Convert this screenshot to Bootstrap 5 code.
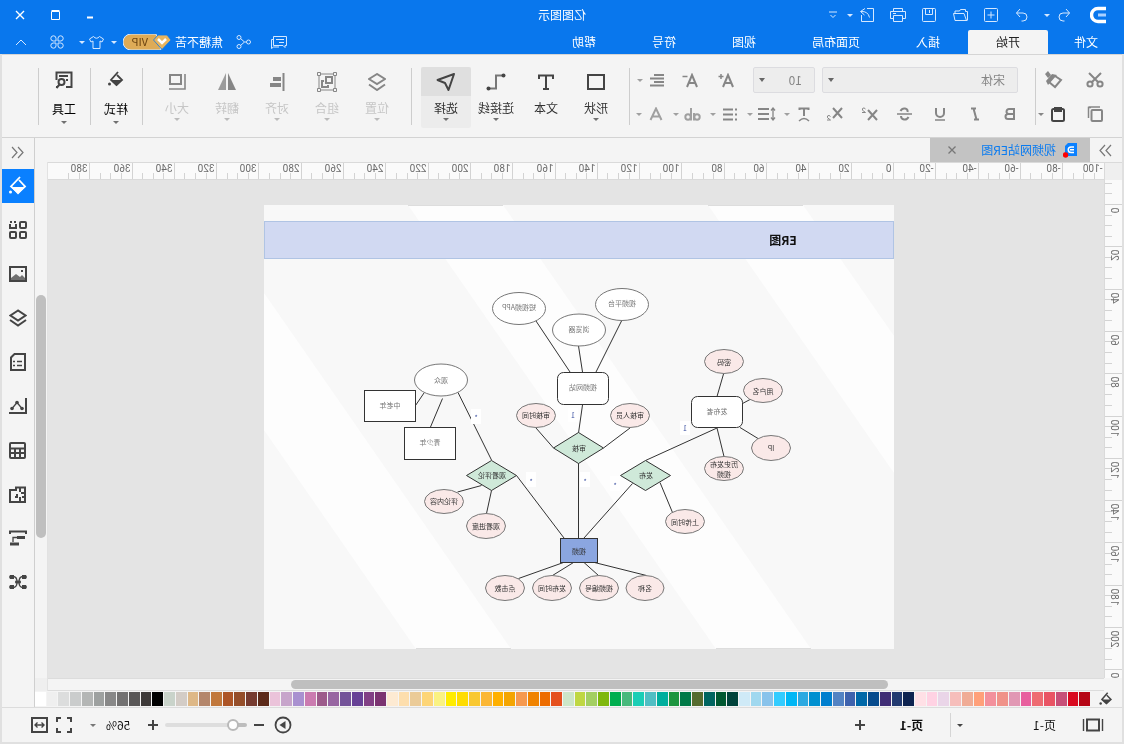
<!DOCTYPE html>
<html lang="zh-CN">
<head>
<meta charset="utf-8">
<meta name="viewport" content="width=device-width, initial-scale=1">
<title>亿图图示</title>
<link href="https://cdn.jsdelivr.net/npm/bootstrap@5.3.0/dist/css/bootstrap.min.css" rel="stylesheet">
<style>
  body { font: 12px/16px "Noto Sans CJK SC", sans-serif; color: #222; background: #f4f4f4; }
  /* the whole window is shown flipped left to right */
  .app { transform: scaleX(-1); height: 100vh; overflow: hidden; }
  button { border: 0; background: none; padding: 0; color: inherit; font: inherit; flex: none; display: inline-flex; align-items: center; justify-content: center; }
  svg { fill: none; stroke: currentColor; flex: none; }
  .solid { fill: currentColor; stroke: none; }
  .caret { width: 10px; height: 24px; display: inline-flex; align-items: center; justify-content: center; }
  .caret::after { content: ""; border: 3px solid transparent; border-top-color: currentColor; border-bottom: 0; }
  .ib { width: 24px; height: 24px; }

  .blue-head { background: #0977ed; color: #fff; }
  .title-row { display: grid; grid-template-columns: 1fr auto 1fr; height: 30px; align-items: center; }
  .qa { padding-left: 18px; color: #d5e8ff; }
  .qa .wide { width: 31px; height: 24px; }
  .undo-btn { margin-left: 14px; }
  .win-btns { padding-right: 3px; }
  .win-btns button { width: 35px; height: 28px; }
  .menu-row { height: 24px; }
  .menu-row a { color: #fff; text-decoration: none; padding: 0 28px; height: 24px; line-height: 24px; }
  .menu-row a:first-child { padding: 0 26px; }
  .menu-row a.on { background: #f4f4f4; color: #222; border-radius: 2px 2px 0 0; }
  .user-area { padding-right: 9px; color: #d5e8ff; }
  .share-btn { margin: 0 8px 0 12px; }
  .shirt-btn { width: 20px; margin-left: 2px; }
  .apps-btn { margin: 0 12px 0 8px; }

  .frame { border: 2px solid #e0e0e0; border-top: 0; min-height: 0; }
  .ribbon { height: 84px; border-top: 1px solid #d5d5d5; border-bottom: 1px solid #d3d3d3; color: #868686; }
  .vsep { width: 1px; height: 57px; margin-top: 13px; background: #cdcdcd; flex: none; }
  .two-rows { padding-top: 8px; flex: none; }
  .two-rows > div { height: 34px; display: flex; align-items: center; }
  .clip { width: 86px; padding-left: 15px; }
  .brush-btn { margin-left: 17px; }
  .paste-btn { margin-left: 13px; color: #444; }
  .fontbox { width: 405px; }
  .font-row1 { padding-left: 17px; }
  .font-row2 { padding-left: 13px; gap: 11px; }
  .grow-btn { margin-left: 15px; } .shrink-btn { margin-left: 12px; } .align-btn { margin-left: 9px; }
  .drop-set { gap: 3px; margin-left: -4px; }
  .pale { color: #a0a0a0; }
  .pick { height: 26px; border: 1px solid #dcdce0; border-radius: 2px; font: 12px/16px "Noto Sans CJK SC", sans-serif; color: #868686; padding: 0 20px 0 12px; appearance: none;
    background: #ededed url("data:image/svg+xml,%3Csvg xmlns='http://www.w3.org/2000/svg' width='6' height='4'%3E%3Cpath d='M0 0h6L3 4z' fill='%23666'/%3E%3C/svg%3E") no-repeat right 5px top 10px; }
  .pick-family { width: 196px; } .pick-size { width: 62px; margin-left: 7px; }
  .big-set { padding: 0 9px; } .big-set.first { padding-left: 8px; }
  .big { width: 50px; flex-direction: column; justify-content: flex-start; height: 61px; margin-top: 12px; border-radius: 2px; overflow: hidden; color: #444; }
  .big .pic { height: 29px; width: 100%; display: flex; align-items: center; justify-content: center; }
  .big .name { height: 16px; margin-top: 4px; color: #333; }
  .big .caret { height: 7px; color: #707070; }
  .big.on { background: #ececec; } .big.on .pic { background: #dfdfdf; }
  .big.off { color: #868686; } .big.off .name { color: #c6c6c6; } .big.off .caret { color: #bbb; }
  .big.low { margin-left: 1px; }
  .big.low .name { margin-top: 5px; color: #000; } .big.low .caret { height: 11px; } .big.low svg { margin-bottom: 4px; }

  .tabstrip { height: 24px; }
  .collapse-btn { width: 32px; height: 24px; color: #777; }
  .doc-tab { width: 160px; height: 24px; background: #c3c3c3; color: #0a7bf0; padding-left: 13px; gap: 7px; }
  .doc-tab .ib { color: #777; margin: 0 10px 0 auto; }
  .ruler-h { height: 18px; border: 1px solid #dadada; border-width: 1px 0; background: #fafafa; }
  .ruler-v { width: 18px; border-right: 1px solid #dadada; background: #fafafa; overflow: hidden; }
  .ruler-h svg, .ruler-v svg { stroke: #d3d3d3; display: block; overflow: visible; }
  .ruler-h text, .ruler-v text { font: 10px Roboto, sans-serif; fill: #6b6b6b; stroke: none; }
  .corner { width: 18px; background: #efefef; border-top: 1px solid #dadada; border-right: 1px solid #dadada; }
  .board { background: #e4e4e4; overflow: hidden; padding: 25px 0 0 210px; }
  .sheet { width: 630px; height: 444px; display: block; background: #f8f8f8; stroke: #333; }
  .sheet text { font: 7px "Noto Sans CJK SC", sans-serif; fill: #333; stroke: none; text-anchor: middle; }
  .sheet .soft text { fill: #777; }
  .sheet .heading { font: bold 12px "Noto Sans CJK SC", sans-serif; fill: #111; }
  .sheet .tag { fill: #3a4fa0; }
  .vbar { width: 13px; background: #f4f4f4; border-left: 1px solid #e2e2e2; padding: 115px 1px 0; }
  .vbar div { height: 243px; border-radius: 5px; background: #bfbfbf; }
  .hbar { height: 13px; margin-left: 18px; background: #f4f4f4; border: 1px solid #dcdcdc; border-width: 1px 0; padding: 1px 243px 0 216px; }
  .hbar div { height: 9px; border-radius: 5px; background: #bfbfbf; }
  .bar-end { background: #efefef; }
  .palette { height: 16px; color: #444; }
  .palette button { width: 32px; }
  .swatches { display: grid; grid-template-columns: repeat(90, 1fr); column-gap: 1px; height: 14px; }

  .tools { width: 33px; border-left: 1px solid #cfcfcf; background: #f4f4f4; color: #444; gap: 10px; }
  .tools button { width: 32px; height: 34px; }
  .tools .collapse-btn { height: 21px; margin-top: 4px; margin-bottom: -4px; }
  .tools .on { background: #0a80ff; color: #fff; }

  .status { height: 35px; border-top: 1px solid #dcdcdc; color: #444; padding: 0 26px 0 18px; }
  .status .txt { color: #111; }
  .page-pick { margin: 0 68px 0 26px; }
  .page-line { width: 1px; height: 24px; margin: 0 27px 0 4px; background: #d5d5d5; }
  .add-page { margin-left: 28px; }
  .percent { margin: 0 8px 0 11px; }
  .percent-list { margin-right: 12px; color: #777; }
  .zoomer { width: 82px; height: 16px; appearance: none; background: none; }
  .zoomer::-webkit-slider-runnable-track { height: 4px; border-radius: 2px; background: linear-gradient(90deg, #bdbdbd 16%, #dedede 16%); }
  .zoomer::-webkit-slider-thumb { appearance: none; width: 12px; height: 12px; margin-top: -4px; border-radius: 50%; background: #fff; border: 2px solid #b9b9b9; }
</style>
<script src="https://cdn.jsdelivr.net/npm/bootstrap@5.3.0/dist/js/bootstrap.bundle.min.js"></script>
</head>
<body>
<div class="app d-flex flex-column">

<header class="blue-head flex-shrink-0">
  <div class="title-row">
    <div class="qa d-flex align-items-center">
      <svg width="16" height="18" viewBox="0 0 16 18"><path d="M0 2.500H8A6.500 6.500 0 0 1 8 15.500H0" stroke="#fff" stroke-width="3.400"/><path d="M0 9h8" stroke="#a9d0ff" stroke-width="3"/></svg>
      <button class="ib undo-btn" aria-label="撤销"><svg width="14" height="14" viewBox="0 0 14 14"><path d="M5 1L1.500 5 5 9M1.500 5H8a4 4 0 0 1 0 8H6.500"/></svg></button>
      <button class="caret" aria-label="撤销列表"></button>
      <button class="wide ms-1" aria-label="重做"><svg width="14" height="14" viewBox="0 0 14 14"><path d="M9 1l3.500 4L9 9M12.500 5H6a4 4 0 0 0 0 8h1.500"/></svg></button>
      <button class="wide" aria-label="新建"><svg width="14" height="14" viewBox="0 0 14 14"><rect x=".5" y=".5" width="13" height="13" rx="1"/><path d="M7 3.500v7M3.500 7h7"/></svg></button>
      <button class="wide" aria-label="打开"><svg width="15" height="14" viewBox="0 0 15 14"><path d="M.5 12V3.500h2V1.500h5l1 1.500H13v2.500M.5 12.500h12.500l1.500-7H4L1.500 12.500"/></svg></button>
      <button class="wide" aria-label="保存"><svg width="14" height="14" viewBox="0 0 14 14"><rect x=".5" y=".5" width="13" height="13" rx="1"/><path d="M3.500.5v6h7v-6M6.500 2v3"/></svg></button>
      <button class="wide" aria-label="打印"><svg width="16" height="14" viewBox="0 0 16 14"><path d="M3.500 3.500v-3h9v3M3.500 10.500H.5v-7h15v7h-3M3.500 7.500h9v6h-9zM10 5.500h3"/></svg></button>
      <button class="ib ms-1" aria-label="导出"><svg width="14" height="14" viewBox="0 0 14 14"><path d="M7 .5H.5v13h12V7M9 .5l4.500 3L9.500 7M13 3.500Q6 3 4.500 9.500"/></svg></button>
      <button class="caret" aria-label="导出列表"></button>
      <button class="ib" aria-label="自定义"><svg width="8" height="8" viewBox="0 0 8 8"><path d="M0 1h8M1.500 4L4 6.500 6.500 4"/></svg></button>
    </div>
    <div>亿图图示</div>
    <div class="win-btns d-flex justify-content-end">
      <button aria-label="最小化"><svg width="10" height="10"><path d="M2 7.500h6" stroke-width="2"/></svg></button>
      <button aria-label="最大化"><svg width="10" height="10"><path d="M.5 1.500h8v8h-8zM.5.500h8"/></svg></button>
      <button aria-label="关闭"><svg width="10" height="10"><path d="M1 1l8 8M9 1L1 9" stroke-width="1.400"/></svg></button>
    </div>
  </div>
  <div class="menu-row d-flex justify-content-between">
    <nav class="d-flex">
      <a href="#">文件</a><a href="#" class="on">开始</a><a href="#">插入</a><a href="#">页面布局</a><a href="#">视图</a><a href="#">符号</a><a href="#">帮助</a>
    </nav>
    <div class="user-area d-flex align-items-center">
      <button class="ib" aria-label="评论"><svg width="16" height="13" viewBox="0 0 16 13"><path d="M.5.500h13v9H4l-2 2v-2H.500zM3 3.500h8M3 6.500h5M13.500 3.500h2v9l-2-1.500H8"/></svg></button>
      <button class="ib share-btn" aria-label="分享"><svg width="15" height="14" viewBox="0 0 15 14"><circle cx="2.500" cy="7" r="2"/><circle cx="12" cy="2.500" r="2"/><circle cx="12" cy="11.500" r="2"/><path d="M4.500 7h2l4-3.500M6.500 7l4 3.500"/></svg></button>
      <span class="text-white">焦糖不苦</span>
      <svg class="ms-1" width="48" height="16" viewBox="0 0 48 16" stroke="none"><path d="M15 0h25a8 8 0 0 1 0 16H10z" fill="#deab57"/><path d="M4 1h9l4.500 5L9 15.500 0 6z" fill="#e9b55e" stroke="#0977ed" stroke-width=".8"/><path d="M5 5l4 4 4-4" stroke="#fff" stroke-width="2.500"/><text x="23" y="12" font-size="11" fill="#6b4310" stroke="none">VIP</text></svg>
      <button class="caret ms-1" aria-label="账户"></button>
      <button class="ib shirt-btn" aria-label="主题"><svg width="15" height="13" viewBox="0 0 15 13"><path d="M4.500.5L.5 3l1.500 3 2-1v7.500h7V5l2 1 1.500-3-4-2.500Q7.500 4 4.500.5z"/></svg></button>
      <button class="caret" aria-label="主题列表"></button>
      <button class="ib apps-btn" aria-label="应用"><svg width="14" height="14" viewBox="0 0 14 14"><path d="M6 6H3.200A2.600 2.600 0 1 1 6 3.200zM8 6V3.200A2.600 2.600 0 1 1 10.800 6zM6 8v2.800A2.600 2.600 0 1 1 3.200 8zM8 8h2.800A2.600 2.600 0 1 1 8 10.800z"/></svg></button>
      <button class="ib" aria-label="收起"><svg width="12" height="7"><path d="M1 6l5-5 5 5"/></svg></button>
    </div>
  </div>
</header>

<div class="frame flex-grow-1 d-flex flex-column">
<div class="ribbon d-flex align-items-start flex-shrink-0">
  <div class="two-rows clip">
    <div>
      <button class="ib" aria-label="剪切"><svg width="18" height="16" viewBox="0 0 18 16" stroke-width="2"><circle cx="4" cy="12" r="2.600"/><circle cx="14" cy="12" r="2.600"/><path d="M3 1l9.500 9.500M15 1L5.500 10.500"/></svg></button>
      <button class="ib brush-btn" aria-label="格式刷"><svg width="18" height="18" viewBox="0 0 18 18"><path d="M8 5L2 9l6 7 6-5" stroke-width="2"/><path d="M6 4l5-1 6 7-2 4zM12 4l3-4 3 3-3 4z" class="solid"/></svg></button>
    </div>
    <div>
      <button class="ib" aria-label="复制"><svg width="16" height="16" viewBox="0 0 16 16"><path d="M12 1.500h2.500V12M3 1h11.500" stroke-width="1.500"/><rect x="1" y="4" width="10.500" height="11" rx="1" stroke-width="2"/></svg></button>
      <button class="ib paste-btn" aria-label="粘贴"><svg width="16" height="16" viewBox="0 0 16 16" stroke-width="2"><rect x="2" y="3" width="12" height="12" rx="1.500"/><path d="M5 2h6v3H5z"/></svg></button>
      <button class="caret" aria-label="粘贴选项"></button>
    </div>
  </div>
  <div class="vsep"></div>
  <div class="two-rows fontbox">
    <div class="font-row1">
      <select class="pick pick-family" aria-label="字体"><option>宋体</option></select>
      <select class="pick pick-size" aria-label="字号"><option>10</option></select>
      <button class="ib grow-btn" aria-label="增大字号"><svg width="16" height="15" viewBox="0 0 16 15"><path d="M1 14L6 2l5 12M3 10h6" stroke-width="2"/><path d="M10.500 3.500h5M13 1v5" stroke-width="1.500"/></svg></button>
      <button class="ib shrink-btn" aria-label="减小字号"><svg width="16" height="15" viewBox="0 0 16 15"><path d="M1 14L6 2l5 12M3 10h6" stroke-width="2"/><path d="M10.500 3.500h5" stroke-width="1.500"/></svg></button>
      <button class="ib align-btn" aria-label="对齐方式"><svg width="14" height="13"><path d="M0 1h10M0 4.500h14M0 8h10M0 11.500h14" stroke-width="2"/></svg></button>
      <button class="caret pale" aria-label="对齐选项"></button>
    </div>
    <div class="font-row2">
      <button class="ib" aria-label="加粗"><svg width="12" height="14"><path d="M2 2h5a2.500 2.500 0 0 1 0 5H2h6a2.500 2.500 0 0 1 0 5H2z" stroke-width="2"/></svg></button>
      <button class="ib" aria-label="斜体"><svg width="12" height="14"><path d="M5 1.500h5M2 12.500h5M7.500 1.500l-3 11" stroke-width="2"/></svg></button>
      <button class="ib" aria-label="下划线"><svg width="12" height="14"><path d="M2 1v5a4 4 0 0 0 8 0V1" stroke-width="2"/><path d="M1 13h10" stroke-width="1.500"/></svg></button>
      <button class="ib" aria-label="删除线"><svg width="15" height="14"><path d="M11.500 4Q10 1 7 1.500T4.500 5M3.500 10Q5 13 8 12.500t3-3.500" stroke-width="2"/><path d="M0 7h15" stroke-width="1.500"/></svg></button>
      <button class="ib" aria-label="上标"><svg width="17" height="14"><path d="M1 3l9 10M10 3L1 13" stroke-width="2"/><path d="M12.500 2Q14 0 15.500 1.500T12.500 5.500H16"/></svg></button>
      <button class="ib" aria-label="下标"><svg width="17" height="14"><path d="M1 1l9 10M10 1L1 11" stroke-width="2"/><path d="M12.500 9.500Q14 7.500 15.500 9T12.500 13H16"/></svg></button>
      <div class="d-flex drop-set">
        <div class="d-flex"><button class="ib" aria-label="文字方向"><svg width="12" height="15"><path d="M1.500 3V1.500h9V3M6 2v7" stroke-width="2"/><path d="M1 14q5-5 10 0" stroke-width="1.500"/></svg></button><button class="caret pale" aria-label="文字方向选项"></button></div>
        <div class="d-flex"><button class="ib" aria-label="行距"><svg width="18" height="14"><path d="M7 2h11M7 7h11M7 12h11" stroke-width="2"/><path d="M3 1v12M1 3.500l2-2.500 2 2.500M1 10.500l2 2.500 2-2.500" stroke-width="1.300"/></svg></button><button class="caret pale" aria-label="行距选项"></button></div>
        <div class="d-flex"><button class="ib" aria-label="列表"><svg width="14" height="13"><path d="M0 1.500h2M0 6.500h2M0 11.500h2M4 1.500h10M4 6.500h10M4 11.500h10" stroke-width="2"/></svg></button><button class="caret pale" aria-label="列表选项"></button></div>
        <div class="d-flex pale"><button class="ib" aria-label="高亮"><svg width="17" height="13"><circle cx="4" cy="9" r="2.700" stroke-width="2"/><path d="M7 5v7.500M10 0v12.500" stroke-width="2"/><circle cx="13" cy="9" r="2.700" stroke-width="2"/></svg></button><button class="caret" aria-label="高亮选项"></button></div>
        <div class="d-flex pale"><button class="ib" aria-label="字体颜色"><svg width="14" height="14"><path d="M1.500 13L7 1.500 12.500 13M3.500 9.500h7" stroke-width="2"/></svg></button><button class="caret" aria-label="字体颜色选项"></button></div>
      </div>
    </div>
  </div>
  <div class="vsep"></div>
  <div class="d-flex big-set first">
    <button class="big"><span class="pic"><svg width="18" height="16"><rect x="1" y="1" width="16" height="14" stroke-width="2"/></svg></span><span class="name">形状</span><span class="caret"></span></button>
    <button class="big"><span class="pic"><svg width="16" height="16"><path d="M1 5V1.500h14V5M8 2v13M5 15h6" stroke-width="2"/></svg></span><span class="name">文本</span></button>
    <button class="big"><span class="pic"><svg width="20" height="18"><path d="M4 2.500h6v13h6" stroke-width="2" stroke="#777"/><circle cx="2.500" cy="2.500" r="2" class="solid"/><circle cx="17.500" cy="15.500" r="2" class="solid"/></svg></span><span class="name">连接线</span><span class="caret"></span></button>
    <button class="big on"><span class="pic"><svg width="20" height="20"><path d="M2 2l16.500 6-7.500 3-3.500 7z" stroke-width="2" stroke-linejoin="round"/></svg></span><span class="name">选择</span><span class="caret"></span></button>
  </div>
  <div class="vsep"></div>
  <div class="d-flex big-set">
    <button class="big off" disabled><span class="pic"><svg width="18" height="18"><path d="M9 1l8 5-8 5-8-5zM1 11.500L9 17l8-5.500" stroke-width="2"/></svg></span><span class="name">位置</span><span class="caret"></span></button>
    <button class="big off" disabled><span class="pic"><svg width="20" height="20"><rect x="2" y="2" width="16" height="16"/><path d="M.5.500h3v3h-3zM16.500.500h3v3h-3zM.5 16.500h3v3h-3zM16.500 16.500h3v3h-3z" fill="#f4f4f4"/><path d="M5 5h6v6H5zM13 9h2v6H9v-2" stroke-width="2"/></svg></span><span class="name">组合</span><span class="caret"></span></button>
    <button class="big off" disabled><span class="pic"><svg width="16" height="18"><path d="M1.500 0v18" stroke-width="2"/><path d="M4 4h8v4H4zM4 10h11v4H4z" class="solid"/></svg></span><span class="name">对齐</span><span class="caret"></span></button>
    <button class="big off" disabled><span class="pic"><svg width="18" height="17"><path d="M8 0v17H0z" class="solid"/><path d="M10 0v17h8z" class="solid" opacity=".8"/></svg></span><span class="name">翻转</span><span class="caret"></span></button>
    <button class="big off" disabled><span class="pic"><svg width="18" height="17"><path d="M5 2h11v9H5z" stroke-width="2"/><path d="M1 1v15h16" stroke-width="1.600"/></svg></span><span class="name">大小</span><span class="caret"></span></button>
  </div>
  <div class="vsep"></div>
  <button class="big low"><span class="pic"><svg width="16" height="17" viewBox="0 0 16 17"><path d="M6 1l7 8-5.500 5L2 9l5-5" stroke-width="1.800"/><path d="M2 9h11l-5.500 6z" class="solid"/><circle cx="14.500" cy="13" r="1.500" class="solid"/></svg></span><span class="name">样式</span><span class="caret"></span></button>
  <div class="vsep"></div>
  <button class="big low"><span class="pic"><svg width="18" height="18"><path d="M7 16H1.500V1.500h15V9M5 5h9M5 9h2M15 16h2" stroke-width="2"/><circle cx="11.500" cy="11" r="3" stroke-width="2"/><path d="M13.500 13.500l3 3.500" stroke-width="2"/></svg></span><span class="name">工具</span><span class="caret"></span></button>
  <div class="vsep"></div>
</div>

<div class="d-flex flex-grow-1" style="min-height:0">
  <main class="flex-grow-1 d-flex flex-column" style="min-width:0">
    <div class="tabstrip d-flex flex-shrink-0">
      <button class="collapse-btn" aria-label="折叠"><svg width="13" height="13"><path d="M1 1l5 5.500L1 12M7 1l5 5.500L7 12" stroke-width="1.200"/></svg></button>
      <div class="doc-tab d-flex align-items-center">
        <svg width="14" height="16" viewBox="0 0 14 16"><path d="M0 1h9l3 3v10H0z" fill="#0a80ff" stroke="none"/><path d="M3 5h3a2.700 2.700 0 0 1 0 5.500H3M3 7.700h4" stroke="#fff" stroke-width="1.500"/><circle cx="11.500" cy="13" r="2.700" fill="#f00" stroke="none"/></svg>
        <span>视频网站ER图</span>
        <button class="ib" aria-label="关闭"><svg width="8" height="8"><path d="M.5.500l7 7M7.500.500l-7 7" stroke-width="1.300"/></svg></button>
      </div>
    </div>
    <div class="d-flex flex-shrink-0">
      <div class="corner"></div>
      <div class="ruler-h flex-grow-1 overflow-hidden"><svg id="rulerH" width="100%" height="16"></svg></div>
      <div class="vbar p-0"></div>
    </div>
    <div class="d-flex flex-grow-1" style="min-height:0">
      <div class="ruler-v"><svg id="rulerV" width="17" height="100%"></svg></div>
      <div class="board flex-grow-1">
        <svg class="sheet" viewBox="0 0 630 444">
          <path d="M486 0H391L83 444H178zM186 0H91L0 131V268zM786 0H691L383 444H478z" fill="#fdfdfd" stroke="none"/>
          <path d="M83 443.500h95M383 443.500h95M91 .500H186M391 .500h95" stroke="#ddd"/>
          <rect x=".5" y="16.500" width="629" height="37" fill="#d1d9f2" stroke="#b0c4e4"/>
          <text class="heading" x="111" y="40">ER图</text>
          <path d="M358 116L324 167M315.500 141L311.500 167M272.500 116L298 167M470 188L478.500 200.500M451.500 193.500L463.500 222M436 187.500L402.500 255M311.500 200L315.500 228M358 223L340.500 243M264 223L290.500 243M170.500 169L177 191.500M143 194L151.500 198.500M154 222.500L136 233.500M177 223L170 251.500M177 223L248.500 255.500M234 277.500L221.500 307.500M261.500 278.500L310 333M315.500 258V333M377.500 270.500L330 333M412.500 280.500L436.500 287M402.500 285.500L407.500 308.500M330.500 357.500L375.500 373.500M320.500 357.500L341.500 370.500M310 357.500L295.500 370.500M299.500 357.500L247.500 370.500"/>
          <g fill="#fff" stroke="none"><path d="M413 204h10v15h-10zM358 267h10v15h-10zM304 267h10v15h-10zM274 271h10v15h-10zM204 216h10v14h-10zM316 203h10v14h-10z"/></g>
          <g><text class="tag" x="321" y="213">1</text><text class="tag" x="209" y="226">1</text><text class="tag" x="418" y="215">*</text><text class="tag" x="363" y="279">*</text><text class="tag" x="309" y="279">*</text><text class="tag" x="279" y="283">*</text></g>
          <g class="soft" fill="#fff">
            <g stroke="#777"><ellipse cx="272" cy="99.500" rx="26.500" ry="16"/><ellipse cx="375" cy="103.500" rx="26.500" ry="16"/><ellipse cx="315" cy="125" rx="26.500" ry="16"/><ellipse cx="453" cy="175" rx="26.500" ry="16"/></g>
            <rect x="285.500" y="167.500" width="51" height="32" rx="6"/><rect x="151.500" y="191.500" width="51" height="31" rx="6"/><rect x="478.500" y="185.500" width="51" height="31"/><rect x="438.500" y="222.500" width="51" height="32"/>
            <text x="272" y="101">视频平台</text><text x="375" y="105">短视频APP</text><text x="315" y="127">浏览器</text><text x="453" y="178">观众</text><text x="311" y="185">视频网站</text><text x="177" y="209">发布者</text><text x="504" y="203">中老年</text><text x="464" y="240">青少年</text>
          </g>
          <g fill="#fae9e8" stroke="#777">
            <ellipse cx="358" cy="210.500" rx="19.500" ry="12"/><ellipse cx="264" cy="210.500" rx="19.500" ry="12"/><ellipse cx="170" cy="156.500" rx="19.500" ry="12"/><ellipse cx="131" cy="185.500" rx="19.500" ry="12"/><ellipse cx="123" cy="243" rx="19.500" ry="12.500"/><ellipse cx="170" cy="263.500" rx="19.500" ry="12"/><ellipse cx="209" cy="316.500" rx="19.500" ry="12"/><ellipse cx="450" cy="296.500" rx="19.500" ry="12"/><ellipse cx="408" cy="321" rx="19.500" ry="12.500"/><ellipse cx="389" cy="383" rx="19.500" ry="12.500"/><ellipse cx="342" cy="383" rx="19.500" ry="12.500"/><ellipse cx="295" cy="383" rx="19.500" ry="12.500"/><ellipse cx="249" cy="383" rx="19" ry="12.500"/>
          </g>
          <path d="M248.500 255.500l25 15-25 15-25-15zM315.500 227.500l25 15.500-25 15.500-25-15.500zM402.500 255.500l25 15-25 15-25-15z" fill="#cfe9d9"/>
          <rect x="296.500" y="333.500" width="37" height="24" fill="#8ba6e0"/>
          <text x="358" y="213">审核时间</text><text x="264" y="213">审核人员</text><text x="170" y="160">密码</text><text x="131" y="189">用户名</text><text x="123" y="246">IP</text><text x="170" y="262">历史发布</text><text x="170" y="272">视频</text><text x="209" y="320">上传时间</text><text x="450" y="299">评论内容</text><text x="408" y="324">观看进度</text><text x="389" y="386">点击数</text><text x="342" y="386">发布时间</text><text x="295" y="386">视频编号</text><text x="249" y="386">名称</text><text x="248" y="273">发布</text><text x="315" y="246">审核</text><text x="402" y="273">观看评论</text><text x="315" y="349">视频</text>
        </svg>
      </div>
      <div class="vbar"><div></div></div>
    </div>
    <div class="d-flex flex-shrink-0">
      <div class="hbar flex-grow-1"><div></div></div>
      <div class="vbar bar-end p-0"></div>
    </div>
    <div class="palette d-flex align-items-center flex-shrink-0">
      <button aria-label="填充颜色"><svg width="14" height="14" viewBox="0 0 16 17"><path d="M6 1l7 8-5.500 5L2 9l5-5" stroke-width="1.800"/><path d="M2 9h11l-5.500 6z" class="solid"/><circle cx="14.500" cy="14" r="1.500" class="solid"/></svg></button>
      <div class="swatches flex-grow-1" id="swatches"></div>
    </div>
  </main>
  <aside class="tools d-flex flex-column flex-shrink-0">
    <button class="collapse-btn" aria-label="折叠"><svg width="13" height="13"><path d="M6 1L1 6.500 6 12M12 1L7 6.500l5 5.500" stroke-width="1.200"/></svg></button>
    <button class="on" aria-label="填充"><svg width="20" height="20" viewBox="0 0 18 20"><path d="M7 1l9 9.500-7 6-7-6L8 4" stroke-width="1.800"/><path d="M1.500 11H16l-7 7.500z" class="solid"/><circle cx="16.500" cy="16" r="1.500" class="solid"/></svg></button>
    <button aria-label="符号库"><svg width="18" height="18" stroke-width="2"><rect x="1" y="1" width="6" height="6" rx="1"/><path d="M11 3V7h6V3M11 1h2M15 1h2"/><rect x="1" y="11" width="6" height="6" rx="1"/><rect x="11" y="11" width="6" height="6" rx="1"/></svg></button>
    <button aria-label="图片"><svg width="18" height="16"><rect x="1" y="1" width="16" height="14" stroke-width="2"/><path d="M2 14v-2l3-3 2 2 4-3 5 4v2z" class="solid" opacity=".75"/><path d="M4 4h2v2H4z" class="solid"/></svg></button>
    <button aria-label="图层"><svg width="18" height="18"><path d="M9 1.500l7.500 5L9 11.500l-7.500-5zM1 11l8 5.500 8-5.500" stroke-width="2"/></svg></button>
    <button aria-label="页面"><svg width="16" height="18"><path d="M1 1h10.500L15 4.500V17H1z" stroke-width="2"/><path d="M4 8.500h5M11 8.500h2M4 12.500h5M11 12.500h2" stroke-width="1.600"/></svg></button>
    <button aria-label="图表"><svg width="18" height="16"><path d="M1 0v15h17" stroke-width="2"/><path d="M5 10.500L10 4.500l5 6" stroke-width="1.300"/><circle cx="5" cy="10.500" r="1.800" class="solid"/><circle cx="10" cy="4.500" r="1.800" class="solid"/><circle cx="15" cy="10.500" r="1.800" class="solid"/></svg></button>
    <button aria-label="表格"><svg width="17" height="17" stroke-width="2"><rect x="1" y="1" width="15" height="15" rx="1"/><path d="M1 6.500h15M1 11h15M6 6v10M11 6v10"/></svg></button>
    <button aria-label="平面图"><svg width="17" height="17" stroke-width="2"><path d="M1 1.500h9V4h6v12H1zM6 1v5M1 7h4M6 11v5M1 11h3M9 8v3h2"/></svg></button>
    <button aria-label="甘特图"><svg width="18" height="16"><path d="M0 1.500h18M1 1v3M17 1v3" stroke-width="2"/><path d="M2 6h8v3H2zM8 12.500h9v3H8z" class="solid"/><path d="M10 7.500h4V12" stroke-width="1.300"/></svg></button>
    <button aria-label="思维导图"><svg width="18" height="16"><path d="M4 2.500q4 0 4 5.500t-4 5.500M14 2.500q-4 0-4 5.500t4 5.500M6 8h6" stroke-width="1.300"/><path d="M1 1h4v4H1L0 3zM1 11h4v4H1l-1-2zM13 1h4l1 2-1 2h-4zM13 11h4l1 2-1 2h-4zM6.500 6.500h5v3h-5z" class="solid"/></svg></button>
  </aside>
</div>

<footer class="status d-flex align-items-center justify-content-between flex-shrink-0">
  <div class="d-flex align-items-center">
    <button aria-label="页面视图"><svg width="22" height="14"><path d="M5 1.500h12v11H5z" stroke-width="2"/><path d="M1.500 1v12M20.500 1v12" stroke-width="1.400"/></svg></button>
    <button class="txt page-pick">页-1</button>
    <button class="caret" aria-label="页面列表"></button>
    <div class="page-line"></div>
    <button class="txt fw-bold">页-1</button>
    <button class="ib add-page" aria-label="新增页面"><svg width="10" height="10"><path d="M5 0v10M0 5h10" stroke-width="2"/></svg></button>
  </div>
  <div class="d-flex align-items-center">
    <button class="ib" aria-label="演示"><svg width="18" height="18"><circle cx="9" cy="9" r="7.500" stroke-width="1.800"/><path d="M6.500 5l6 4-6 4z" class="solid"/></svg></button>
    <button class="ib" aria-label="缩小"><svg width="10" height="10"><path d="M0 5h10" stroke-width="2"/></svg></button>
    <input type="range" class="zoomer" min="0" max="100" value="12" aria-label="缩放">
    <button class="ib" aria-label="放大"><svg width="10" height="10"><path d="M5 0v10M0 5h10" stroke-width="2"/></svg></button>
    <button class="txt percent">56%</button>
    <button class="caret percent-list" aria-label="缩放列表"></button>
    <button class="ib" aria-label="全屏"><svg width="16" height="16"><path d="M1 5V1h4M11 1h4v4M15 11v4h-4M5 15H1v-4" stroke-width="2"/></svg></button>
    <button class="ib" aria-label="适应宽度"><svg width="17" height="16"><rect x="1" y="1" width="15" height="14" stroke-width="2"/><path d="M4 8h9M6.500 5.500L4 8l2.500 2.500M10.500 5.500L13 8l-2.500 2.500" stroke-width="1.400"/></svg></button>
  </div>
</footer>
</div>
</div>

<script>
  // colour strip
  var colours = ("b60515 d9091f c74f78 e95464 ee6b72 e85f9e e198b4 f09289 f3909c ffa07a f0ac96 f6bebb ead5e8 ffd2e3 ffe0e6 " +
    "0e2350 223a70 402d75 074b8d 0068a8 3e62ad 5383c3 007fce 0090d0 2ca9e1 00b7f5 33ccff 89c3eb a0d8ef cfeaf7 " +
    "00433b 005831 006560 556b2f 007947 1d953f 00ae9d 50bec3 1bceb5 48b97c 00ae4f 7fb80e a3cf62 bfd743 cde6c8 " +
    "e5501e ed6c00 f08300 f6994f f4a501 ffb000 fbb735 f9c831 ffdc00 ffec00 faf282 fdd577 ebcb98 fddead fdead2 " +
    "7b3371 824085 674196 745399 9866a2 9d5b8b cb7bb0 a991d0 c7a5cb ebc3da 5c2a19 763b30 954e2a ad5527 c1783c b4866b deb887 d3ccc6 c9d3ca " +
    "000000 3e3a39 595757 727171 888888 9ea1a0 b4b6b5 cacccc dcdddd efefef ffffff").split(" ");
  document.getElementById("swatches").innerHTML = colours.map(function (c) {
    return '<span style="background:#' + c + '"></span>';
  }).join("");

  // rulers: a long mark every 20 mm, three short ones between
  function ruler(id, zero, from, to, upright) {
    var step = 42.3, marks = "", labels = "";
    for (var q = from * 4; q <= to * 4; q++) {
      var at = Math.round(zero + q * step / 4) + .5, start = q % 4 ? 10 : 0;
      marks += upright ? "M" + start + " " + at + "H17" : "M" + at + " " + start + "V16";
      if (q % 4 === 0) {
        labels += upright
          ? '<text text-anchor="end" transform="translate(11 ' + (at + 3) + ') rotate(-90)">' + q * 5 + "</text>"
          : '<text x="' + (at + 2) + '" y="9">' + q * 5 + "</text>";
      }
    }
    document.getElementById(id).innerHTML = '<path d="' + marks + '"/>' + labels;
  }
  ruler("rulerH", 210, -5, 19.5, false);
  ruler("rulerV", 24, -.5, 11, true);
</script>
</body>
</html>
